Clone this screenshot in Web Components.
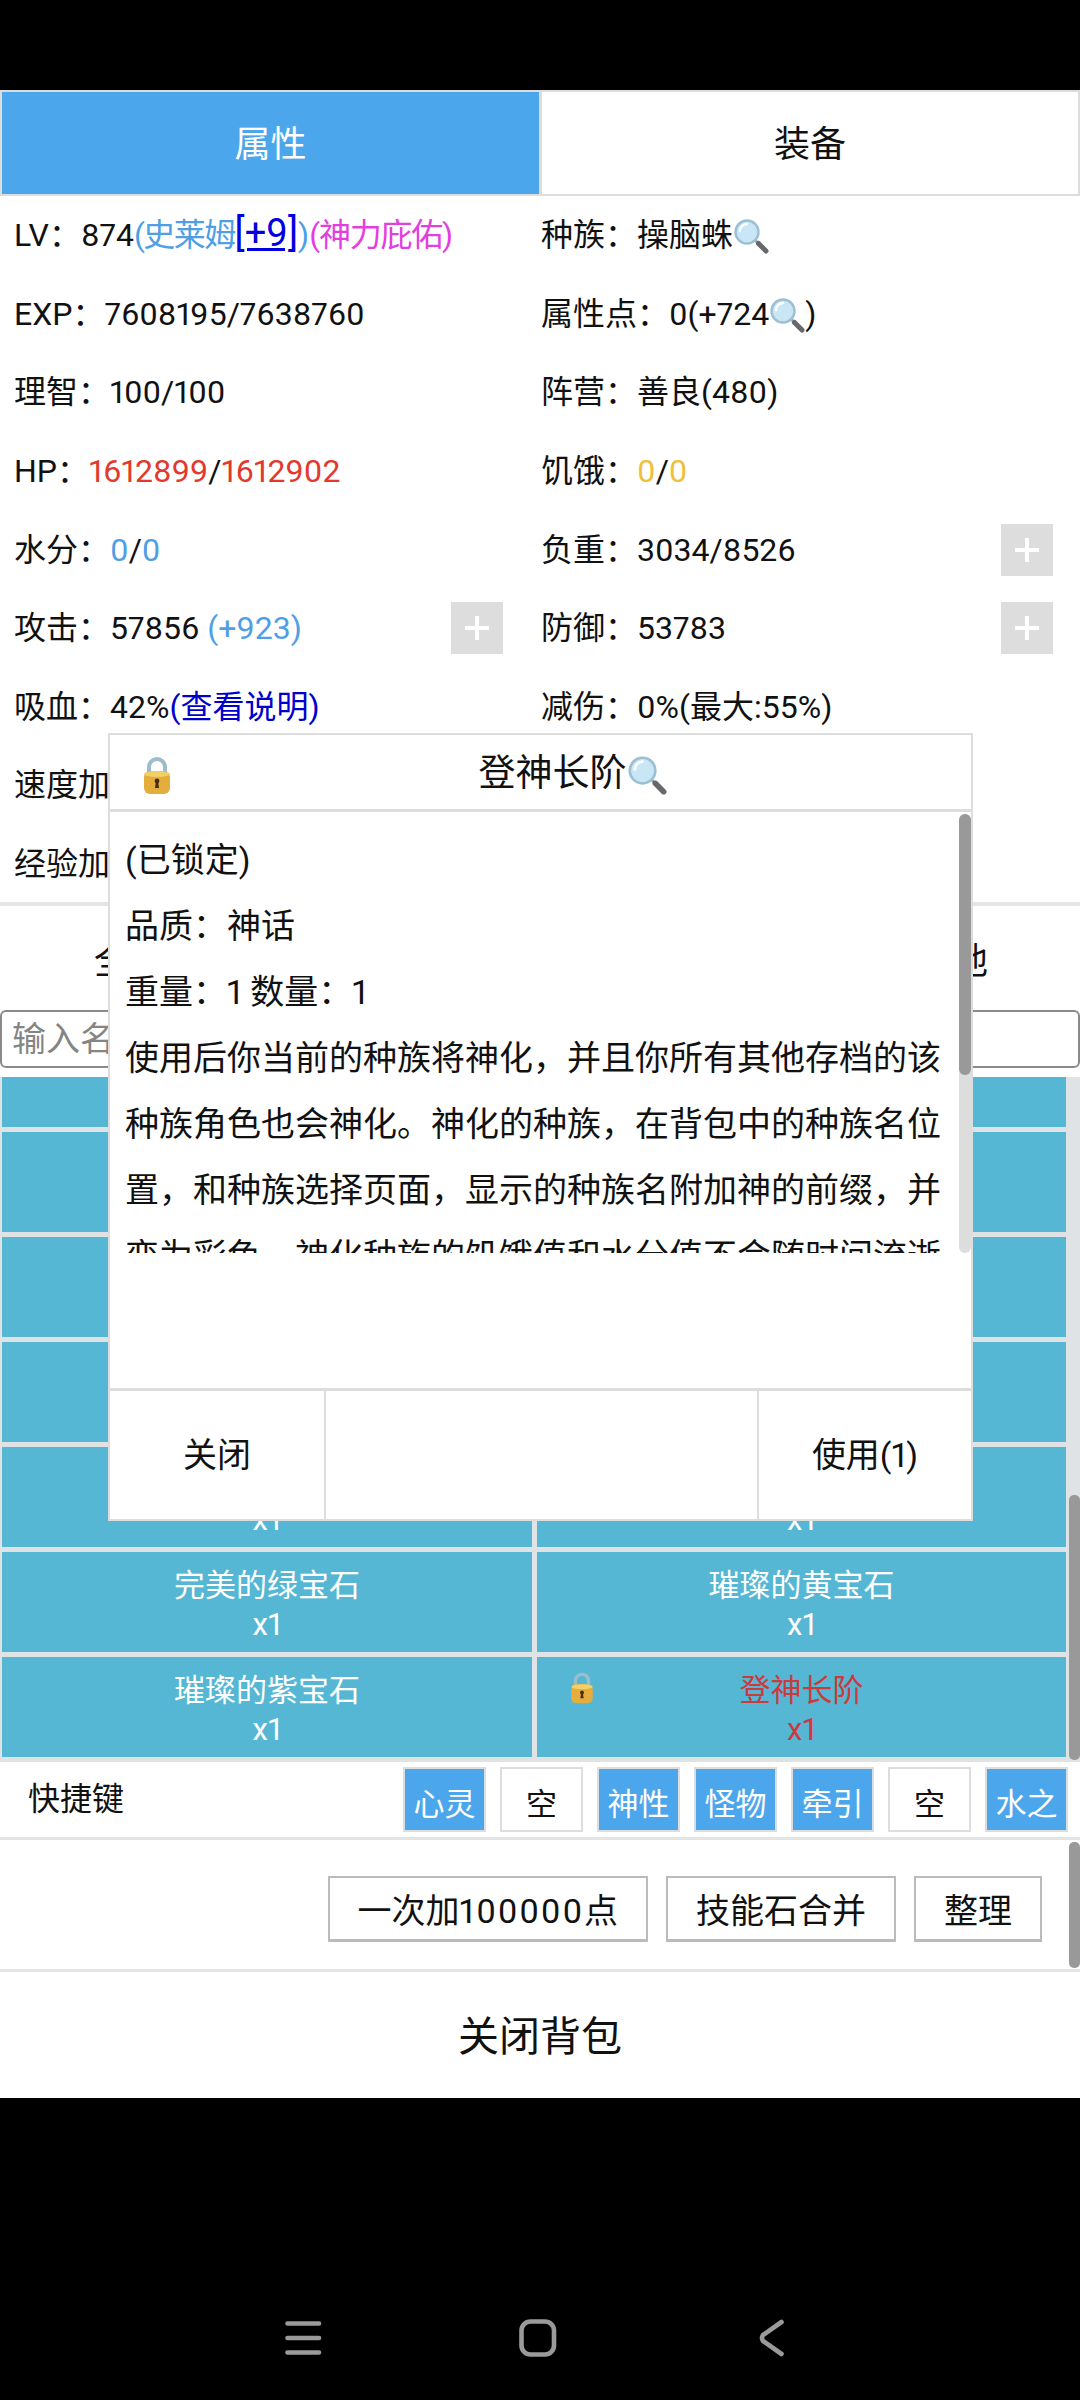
<!DOCTYPE html>
<html lang="zh">
<head>
<meta charset="utf-8">
<title>背包</title>
<style>
html,body{margin:0;padding:0;background:#000;}
body{font-family:Roboto,"Noto Sans CJK SC",sans-serif;font-size:32px;color:#111;font-variant-numeric:proportional-nums;}
</style>
</head>
<body>
<template id="lockIcon">
<svg viewBox="0 0 28 40" width="100%" height="100%" style="display:block">
	<path d="M6 19V12a8 8 0 0 1 16 0v7" fill="none" stroke="#9dbccc" stroke-width="4"/>
	<rect x="1" y="16" width="26" height="23" rx="6" fill="#e5ae3c"/>
	<ellipse cx="14" cy="19" rx="13" ry="3" fill="#f3cf68"/>
	<circle cx="14" cy="26" r="2.4" fill="#4a2c0c"/>
	<path d="M13 26h2l1 7h-4z" fill="#4a2c0c"/>
</svg>
</template>
<template id="glassIcon">
<svg viewBox="0 0 36 36" width="100%" height="100%" style="display:block">
	<path d="M22 22L26 26" stroke="#9a9c9f" stroke-width="2.6"/>
	<path d="M25.5 25.5L33 33" stroke="#66686b" stroke-width="5" stroke-linecap="round"/>
	<circle cx="14" cy="14" r="11.5" fill="#c9e6f7" stroke="#9dbfd2" stroke-width="2.4"/>
	<path d="M7 13a7 7 0 0 1 7-7" fill="none" stroke="#fff" stroke-width="2.4" stroke-linecap="round"/>
</svg>
</template>

<game-app>
	<tab-bar></tab-bar>
	<stat-grid></stat-grid>
	<filter-bar></filter-bar>
	<search-box></search-box>
	<item-list></item-list>
	<hot-keys></hot-keys>
	<action-bar></action-bar>
	<close-bag></close-bag>
	<item-modal></item-modal>
	<nav-keys></nav-keys>
</game-app>

<script>
class LockIcon extends HTMLElement{
	constructor(){
		super();
		this.attachShadow({mode:'open'})
		this.shadowRoot.innerHTML='<style>:host{display:inline-block;width:28px;height:40px}</style>'
		this.shadowRoot.appendChild(document.getElementById('lockIcon').content.cloneNode(true))
	}
}
class GlassIcon extends HTMLElement{
	constructor(){
		super();
		this.attachShadow({mode:'open'})
		this.shadowRoot.innerHTML='<style>:host{display:inline-block;width:36px;height:36px;vertical-align:-8px}</style>'
		this.shadowRoot.appendChild(document.getElementById('glassIcon').content.cloneNode(true))
	}
}
class GameApp extends HTMLElement{
	constructor(){
		super();
		this.attachShadow({mode:'open'})
		this.shadowRoot.innerHTML=`
<style>
:host{display:block;position:relative;width:1080px;height:2400px;background:#000;padding-top:90px;box-sizing:border-box;overflow:hidden}
#page{background:#fff;height:2008px;display:flex;flex-direction:column}
</style>
<div id="page"><slot></slot></div>`
	}
}
class TabBar extends HTMLElement{
	constructor(){
		super();
		this.attachShadow({mode:'open'})
		this.shadowRoot.innerHTML=`
<style>
:host{display:grid;grid-template-columns:541px 539px;height:106px;font-size:36px}
div{display:flex;align-items:center;justify-content:center;border:2px solid #ddd;box-sizing:border-box;padding-bottom:4px}
.on{background:#4ca6ec;color:#fff}
.off{border-left-width:1px}
</style>
<div class="on">属性</div><div class="off">装备</div>`
	}
}
const plus='<span class="plus"><svg width="24" height="24" viewBox="0 0 24 24"><path d="M12 0v24M0 12h24" stroke="#fff" stroke-width="4"/></svg></span>'
class StatGrid extends HTMLElement{
	constructor(){
		super();
		this.attachShadow({mode:'open'})
		this.shadowRoot.innerHTML=`
<style>
:host{display:grid;grid-template-columns:527px 539px;grid-auto-rows:78.6px;padding-left:14px;border-bottom:4px solid #e4e4e4;margin-top:-3px;height:709px;font-size:32px;white-space:nowrap}
.c{display:flex;align-items:center;justify-content:space-between;padding-right:27px}
.c:nth-child(even){padding-right:38px}
.plus{width:52px;height:52px;background:#ddd;display:flex;align-items:center;justify-content:center;flex:none;margin-top:6px}
.blue{color:#4f9fe6}.pink{color:#e23fe0;letter-spacing:-1.2px}
.tight{letter-spacing:-1.6px}
.link{color:#0000e0;text-decoration:underline;text-decoration-thickness:3px;font-size:38px;line-height:32px}
.red{color:#e2392c}.yellow{color:#f0bf3c}.deep{color:#0000cc}
</style>
<div class="c"><span>LV：874<span class="blue tight">(史莱姆</span><span class="link">[+9]</span><span class="blue">)</span><span class="pink">(神力庇佑)</span></span></div>
<div class="c"><span>种族：操脑蛛<glass-icon></glass-icon></span></div>
<div class="c"><span>EXP：7608195/7638760</span></div>
<div class="c"><span>属性点：0(+724<glass-icon></glass-icon>)</span></div>
<div class="c"><span>理智：100/100</span></div>
<div class="c"><span>阵营：善良(480)</span></div>
<div class="c"><span>HP：<span class="red">1612899</span>/<span class="red">1612902</span></span></div>
<div class="c"><span>饥饿：<span class="yellow">0</span>/<span class="yellow">0</span></span></div>
<div class="c"><span>水分：<span class="blue">0</span>/<span class="blue">0</span></span></div>
<div class="c"><span>负重：3034/8526</span>${plus}</div>
<div class="c"><span>攻击：57856 <span class="blue">(+923)</span></span>${plus}</div>
<div class="c"><span>防御：53783</span>${plus}</div>
<div class="c"><span>吸血：42%<span class="deep">(查看说明)</span></span></div>
<div class="c"><span>减伤：0%(最大:55%)</span></div>
<div class="c"><span>速度加</span></div>
<div class="c"></div>
<div class="c"><span>经验加</span></div>
<div class="c"></div>`
	}
}
class FilterBar extends HTMLElement{
	constructor(){
		super();
		this.attachShadow({mode:'open'})
		this.shadowRoot.innerHTML=`
<style>
:host{display:flex;justify-content:space-between;height:104px;align-items:center;font-size:36px;padding:0 92px 0 94px}
</style>
<span>全部</span><span>其他</span>`
	}
}
class SearchBox extends HTMLElement{
	constructor(){
		super();
		this.attachShadow({mode:'open'})
		this.shadowRoot.innerHTML=`
<style>
:host{display:block;height:64px}
input{display:block;width:100%;height:58px;box-sizing:border-box;border:2px solid #8a8a8a;border-radius:6px;padding:0 10px;font:inherit;font-size:34px;background:#fff;outline:none}
input::placeholder{color:#858585}
</style>
<input placeholder="输入名称">`
	}
}
class ItemCell extends HTMLElement{
	constructor(){
		super();
		this.attachShadow({mode:'open'})
		const name=this.getAttribute('name')
		const under=this.hasAttribute('under')
		this.shadowRoot.innerHTML=`
<style>
:host{display:flex;flex-direction:column;align-items:center;justify-content:center;height:100px;background:#55b7d4;color:#fff;line-height:39px;position:relative;font-size:31px;padding-top:6px;box-sizing:border-box}
:host([locked]){color:#cc3b3b}
lock-icon{position:absolute;left:33px;top:14px;width:24px;height:33px}
</style>
${this.hasAttribute('locked')?'<lock-icon></lock-icon>':''}
<div>${name||'&nbsp;'}</div><div>${under?'&nbsp;':'x1'}</div>`
	}
}
class ItemList extends HTMLElement{
	constructor(){
		super();
		this.attachShadow({mode:'open'})
		this.shadowRoot.innerHTML=`
<style>
:host{display:block;position:relative;height:685px;background:#dfe3e6;overflow:hidden;padding:0 14px 0 2px;margin-top:3px;box-sizing:border-box}
#grid{display:grid;grid-template-columns:530px 529px;column-gap:5px;row-gap:5px;margin-top:-50px}
#bar{position:absolute;right:0;top:418px;width:11px;height:265px;border-radius:5px;background:#999}
</style>
<div id="grid">
<item-cell under></item-cell><item-cell under></item-cell>
<item-cell under></item-cell><item-cell under></item-cell>
<item-cell under></item-cell><item-cell under></item-cell>
<item-cell under></item-cell><item-cell under></item-cell>
<item-cell></item-cell><item-cell></item-cell>
<item-cell name="完美的绿宝石"></item-cell><item-cell name="璀璨的黄宝石"></item-cell>
<item-cell name="璀璨的紫宝石"></item-cell><item-cell name="登神长阶" locked></item-cell>
</div>
<div id="bar"></div>`
	}
}
class HotKeys extends HTMLElement{
	constructor(){
		super();
		this.attachShadow({mode:'open'})
		const keys=[['心灵',1],['空',0],['神性',1],['怪物',1],['牵引',1],['空',0],['水之',1]]
		this.shadowRoot.innerHTML=`
<style>
:host{display:flex;align-items:center;height:78px;padding:0 12px 0 28px;box-sizing:border-box;border-bottom:3px solid #e4e4e4}
b{font-weight:400;margin-right:auto;margin-top:-8px}
div{display:flex;gap:14px}
span{width:83px;height:65px;box-sizing:border-box;border:2px solid #ddd;display:flex;align-items:center;justify-content:center;font-size:31px;padding-top:3px}
.on{background:#4ca6ec;color:#fff}
</style>
<b>快捷键</b><div>${keys.map(k=>`<span class="${k[1]?'on':''}">${k[0]}</span>`).join('')}</div>`
	}
}
class ActionBar extends HTMLElement{
	constructor(){
		super();
		this.attachShadow({mode:'open'})
		this.shadowRoot.innerHTML=`
<style>
:host{display:flex;align-items:center;justify-content:flex-end;gap:18px;height:132px;padding:9px 38px 0 0;box-sizing:border-box;border-bottom:3px solid #e4e4e4;position:relative;font-size:34px}
span{height:66px;box-sizing:border-box;border:2px solid #bbb;border-bottom-width:3px;display:flex;align-items:center;padding:0 28px}
em{font-style:normal;letter-spacing:1.8px}
i{position:absolute;right:0;top:2px;width:11px;height:126px;border-radius:5px;background:#999}
</style>
<span><div>一次加<em>100000</em>点</div></span><span>技能石合并</span><span>整理</span><i></i>`
	}
}
class CloseBag extends HTMLElement{
	constructor(){
		super();
		this.attachShadow({mode:'open'})
		this.shadowRoot.innerHTML=`
<style>
:host{display:flex;align-items:center;justify-content:center;flex:1;font-size:41px;padding-bottom:4px}
</style>
<slot>关闭背包</slot>`
	}
}
class ItemModal extends HTMLElement{
	constructor(){
		super();
		this.attachShadow({mode:'open'})
		this.shadowRoot.innerHTML=`
<style>
:host{position:absolute;left:108px;top:733px;width:865px;height:788px;box-sizing:border-box;border:2px solid #ddd;background:#fff;display:flex;flex-direction:column}
#head{height:77px;border-bottom:3px solid #ddd;display:flex;align-items:center;justify-content:center;position:relative;font-size:37px;flex:none;padding:0 0 4px 64px;box-sizing:border-box}
#head lock-icon{position:absolute;left:33px;top:20px}
#head glass-icon{width:40px;height:40px;vertical-align:-9px}
#body{height:441px;overflow:hidden;position:relative;flex:none;padding:15px 28px 0 15px;box-sizing:border-box;font-size:34px;line-height:66px}
#body p{margin:0}
#track{position:absolute;right:0;top:2px;width:12px;height:439px;background:#ddd;border-radius:6px}
#thumb{position:absolute;right:0;top:2px;width:12px;height:261px;background:#999;border-radius:6px}
#space{flex:1}
#foot{height:131px;display:grid;grid-template-columns:214px 1fr 214px;border-top:3px solid #ddd;box-sizing:border-box;flex:none;font-size:34px}
#foot div{display:flex;align-items:center;justify-content:center;padding-bottom:5px}
#foot div+div{border-left:2px solid #ddd}
</style>
<div id="head"><lock-icon></lock-icon><span>登神长阶<glass-icon></glass-icon></span></div>
<div id="body">
<p>(已锁定)</p><p>品质：神话</p><p>重量：1 数量：1</p>
<p>使用后你当前的种族将神化，并且你所有其他存档的该种族角色也会神化。神化的种族，在背包中的种族名位置，和种族选择页面，显示的种族名附加神的前缀，并变为彩色。神化种族的饥饿值和水分值不会随时间流逝</p>
<div id="track"></div><div id="thumb"></div>
</div>
<div id="space"></div>
<div id="foot"><div>关闭</div><div></div><div>使用(1)</div></div>`
	}
}
class NavKeys extends HTMLElement{
	constructor(){
		super();
		this.attachShadow({mode:'open'})
		this.shadowRoot.innerHTML=`
<style>
:host{position:absolute;left:0;top:2300px;width:1080px;height:70px}
svg{display:block}
</style>
<svg width="1080" height="70" fill="none" stroke="#9a9a9a" stroke-width="4.6" stroke-linecap="round" stroke-linejoin="round">
	<path d="M287.5 23.5H319M287.5 38H319M287.5 52.5H319"/>
	<rect x="521.5" y="21.5" width="32.5" height="33" rx="9"/>
	<path d="M781.5 22L763 35Q761 38 763 41L781.5 54"/>
</svg>`
	}
}
window.customElements.define('lock-icon',LockIcon)
window.customElements.define('glass-icon',GlassIcon)
window.customElements.define('game-app',GameApp)
window.customElements.define('tab-bar',TabBar)
window.customElements.define('stat-grid',StatGrid)
window.customElements.define('filter-bar',FilterBar)
window.customElements.define('search-box',SearchBox)
window.customElements.define('item-cell',ItemCell)
window.customElements.define('item-list',ItemList)
window.customElements.define('hot-keys',HotKeys)
window.customElements.define('action-bar',ActionBar)
window.customElements.define('close-bag',CloseBag)
window.customElements.define('item-modal',ItemModal)
window.customElements.define('nav-keys',NavKeys)
</script>
</body>
</html>
